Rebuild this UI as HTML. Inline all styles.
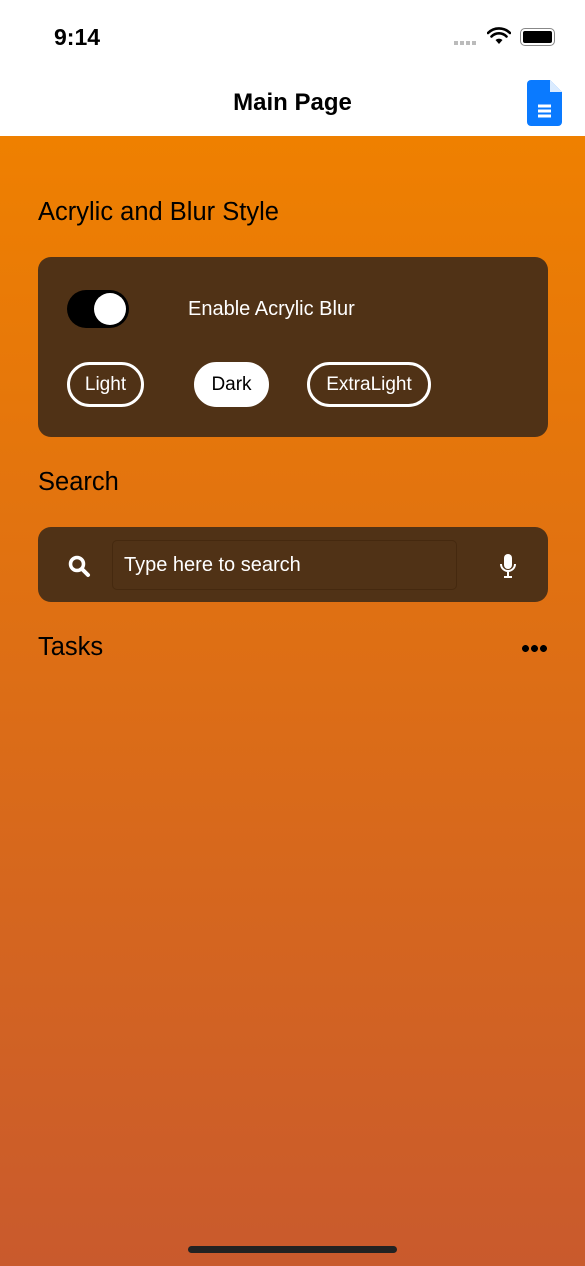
<!DOCTYPE html>
<html><head><style>
*{margin:0;padding:0;box-sizing:border-box}
body{width:585px;height:1266px;overflow:hidden;font-family:"Liberation Sans",sans-serif;position:relative;background:#fff}
.main{position:absolute;top:136px;left:0;width:585px;height:1130px;background:linear-gradient(#ef8000,#c95a2d)}
.t{position:absolute;color:#000}
.card{position:absolute;left:38px;width:510px;background:#503216;border-radius:13px}
.pill{position:absolute;top:362px;height:45px;border:3px solid #fff;border-radius:23px;color:#fff;font-size:19px;text-align:center;line-height:39px}
</style></head><body>
<div class="t" style="left:54px;top:24px;font-size:23px;font-weight:bold">9:14</div>
<div style="position:absolute;left:454px;top:41px;width:24px;height:4px;background:repeating-linear-gradient(90deg,#bbb 0 4px,transparent 4px 6px)"></div>
<svg style="position:absolute;left:487px;top:27px" width="24" height="18" viewBox="0 0 24 18"><path d="M12 17l3.5-4a5 5 0 0 0-7 0z" fill="#000"/><path d="M4.5 9.5a10.5 10.5 0 0 1 15 0M1 6a15.5 15.5 0 0 1 22 0" stroke="#000" stroke-width="2.6" fill="none" stroke-linecap="round"/></svg>
<div style="position:absolute;left:520px;top:28px;width:35px;height:18px;border:1.5px solid #888;border-radius:5px;padding:2px"><div style="width:100%;height:100%;background:#000;border-radius:2px"></div></div>
<div class="t" style="left:0;width:585px;text-align:center;top:89px;font-size:24px;font-weight:bold">Main Page</div>
<svg style="position:absolute;left:527px;top:80px" width="35" height="46" viewBox="0 0 35 46"><path d="M4 0h19l12 12v30a4 4 0 0 1-4 4H4a4 4 0 0 1-4-4V4a4 4 0 0 1 4-4z" fill="#0a7aff"/><path d="M23 0l12 12H23z" fill="#fff" opacity=".85"/><path d="M11 26h13M11 31h13M11 36h13" stroke="#fff" stroke-width="3"/></svg>
<div class="main"></div>
<div class="t" style="left:38px;top:198px;font-size:25.5px">Acrylic and Blur Style</div>
<div class="card" style="top:257px;height:180px"></div>
<div style="position:absolute;left:67px;top:290px;width:62px;height:38px;background:#000;border-radius:19px"><div style="position:absolute;right:3px;top:3px;width:32px;height:32px;background:#fff;border-radius:50%"></div></div>
<div class="t" style="left:188px;top:298px;font-size:20px;color:#fff">Enable Acrylic Blur</div>
<div class="pill" style="left:67px;width:77px">Light</div>
<div class="pill" style="left:194px;width:75px;background:#fff;color:#000">Dark</div>
<div class="pill" style="left:307px;width:124px">ExtraLight</div>
<div class="t" style="left:38px;top:468px;font-size:25.5px">Search</div>
<div class="card" style="top:527px;height:75px"></div>
<svg style="position:absolute;left:67px;top:554px" width="24" height="24" viewBox="0 0 24 24"><circle cx="10" cy="10" r="6.5" stroke="#fff" stroke-width="3.5" fill="none"/><path d="M15 15l6 6" stroke="#fff" stroke-width="4" stroke-linecap="round"/></svg>
<div style="position:absolute;left:112px;top:540px;width:345px;height:50px;border:1px solid #45290f;border-radius:5px"></div>
<div class="t" style="left:124px;top:554px;font-size:20px;color:#fff">Type here to search</div>
<svg style="position:absolute;left:498px;top:553px" width="20" height="26" viewBox="0 0 20 26"><rect x="6" y="1" width="8" height="15" rx="4" fill="#fff"/><path d="M3 11a7 7 0 0 0 14 0M10 18v5M6 24h8" stroke="#fff" stroke-width="2" fill="none"/></svg>
<div class="t" style="left:38px;top:633px;font-size:25.5px">Tasks</div>
<div style="position:absolute;left:521px;top:645px;width:27px;height:7px;background:radial-gradient(circle,#000 3.3px,transparent 3.6px) 0 0/9px 7px repeat-x"></div>
<div style="position:absolute;left:188px;top:1246px;width:209px;height:7px;background:#222;border-radius:4px"></div>
</body></html>
